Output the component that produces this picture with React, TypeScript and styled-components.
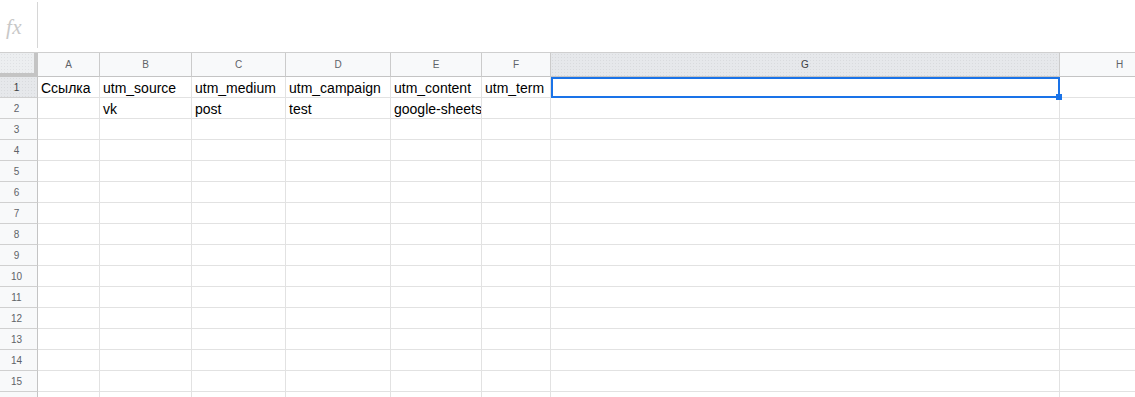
import { FC } from 'react'
import styled, { createGlobalStyle } from 'styled-components'

const GlobalStyle = createGlobalStyle`
  html, body {
    margin: 0;
    padding: 0;
    background: #fff;
    font-family: 'Liberation Sans', Arial, sans-serif;
    overflow: hidden;
  }
`

const columns = [
  { name: 'A', width: 62 },
  { name: 'B', width: 92 },
  { name: 'C', width: 94 },
  { name: 'D', width: 105 },
  { name: 'E', width: 91 },
  { name: 'F', width: 69 },
  { name: 'G', width: 509 },
  { name: 'H', width: 120 },
]

const data: string[][] = [
  ['Ссылка', 'utm_source', 'utm_medium', 'utm_campaign', 'utm_content', 'utm_term', '', ''],
  ['', 'vk', 'post', 'test', 'google-sheets', '', '', ''],
]

// 15 rows are fully visible, the 16th only peeks in at the bottom edge
const ROWS = 16
const VISIBLE_ROWS = 15
const SELECTED_COL = 6
const SELECTED_ROW = 0

const Wrapper = styled.div`
  width: 1135px;
  height: 397px;
  overflow: hidden;
`

const FormulaBar = styled.div`
  display: flex;
  height: 53px;
  box-sizing: border-box;
  border-bottom: 1px solid #cfcfcf;
`

const FxBox = styled.div`
  width: 37px;
  box-sizing: border-box;
  display: flex;
  align-items: center;
  padding: 2px 0 0 6px;
`

const FxLabel = styled.span`
  font-family: 'Liberation Serif', 'Times New Roman', serif;
  font-style: italic;
  font-size: 21px;
  color: #c8c8c8;
  letter-spacing: 0.5px;
`

const FxDivider = styled.div`
  width: 1px;
  margin: 2px 0 4px;
  background: #d6d6d6;
`

const Grid = styled.div`
  display: grid;
  grid-template-columns: 38px ${columns.map(c => `${c.width}px`).join(' ')};
  grid-template-rows: 24px;
  grid-auto-rows: 21px;
`

const Corner = styled.div`
  box-sizing: border-box;
  border-right: 4px solid #c4c4c4;
  border-bottom: 4px solid #c4c4c4;
  background-color: #eceef0;
  background-image: radial-gradient(#dfe1e4 0.6px, transparent 0.8px);
  background-size: 3px 3px;
`

const ColHeader = styled.div<{ $active?: boolean }>`
  box-sizing: border-box;
  border-right: 1px solid #cbcbcb;
  border-bottom: 1px solid #c4c4c4;
  background-color: ${p => (p.$active ? '#e6e8eb' : '#f8f9fa')};
  background-image: ${p => (p.$active ? 'radial-gradient(#d9dbde 0.6px, transparent 0.8px)' : 'none')};
  background-size: 3px 3px;
  display: flex;
  align-items: center;
  justify-content: center;
  font-size: 10px;
  color: ${p => (p.$active ? '#3c4043' : '#5f6368')};
  padding-bottom: 1px;
`

const RowHeader = styled.div<{ $active?: boolean }>`
  box-sizing: border-box;
  border-right: 1px solid #c4c4c4;
  border-bottom: 1px solid #d0d0d0;
  background-color: ${p => (p.$active ? '#e6e8eb' : '#f8f9fa')};
  background-image: ${p => (p.$active ? 'radial-gradient(#d9dbde 0.6px, transparent 0.8px)' : 'none')};
  background-size: 3px 3px;
  display: flex;
  align-items: center;
  justify-content: center;
  padding-right: 4px;
  font-size: 10px;
  color: ${p => (p.$active ? '#3c4043' : '#5f6368')};
`

const Cell = styled.div`
  position: relative;
  box-sizing: border-box;
  border-right: 1px solid #e2e2e2;
  border-bottom: 1px solid #e2e2e2;
  padding: 1px 3px 0;
  display: flex;
  align-items: center;
  font-size: 14px;
  color: #000;
  white-space: nowrap;
  overflow: hidden;
`

const SelectionCell = styled(Cell)`
  overflow: visible;
`

const Selection = styled.div`
  position: absolute;
  top: 0;
  left: 0;
  right: -1px;
  bottom: -1px;
  border: 2px solid #1a73e8;
  pointer-events: none;
  z-index: 2;
`

const FillHandle = styled.div`
  position: absolute;
  right: -4px;
  bottom: -4px;
  width: 6px;
  height: 6px;
  background: #1a73e8;
`

const Row: FC<{ index: number }> = ({ index }) => {
  const values = data[index] || []
  return (
    <>
      <RowHeader $active={index === SELECTED_ROW}>{index < VISIBLE_ROWS ? index + 1 : ''}</RowHeader>
      {columns.map((col, c) =>
        index === SELECTED_ROW && c === SELECTED_COL ? (
          <SelectionCell key={col.name}>
            <Selection>
              <FillHandle />
            </Selection>
          </SelectionCell>
        ) : (
          <Cell key={col.name}>{values[c]}</Cell>
        ),
      )}
    </>
  )
}

const App: FC = () => {
  return (
    <Wrapper>
      <GlobalStyle />
      <FormulaBar>
        <FxBox>
          <FxLabel>fx</FxLabel>
        </FxBox>
        <FxDivider />
      </FormulaBar>
      <Grid>
        <Corner />
        {columns.map((col, i) => (
          <ColHeader key={col.name} $active={i === SELECTED_COL}>
            {col.name}
          </ColHeader>
        ))}
        {Array.from({ length: ROWS }, (_, r) => (
          <Row key={r} index={r} />
        ))}
      </Grid>
    </Wrapper>
  )
}

export default App
